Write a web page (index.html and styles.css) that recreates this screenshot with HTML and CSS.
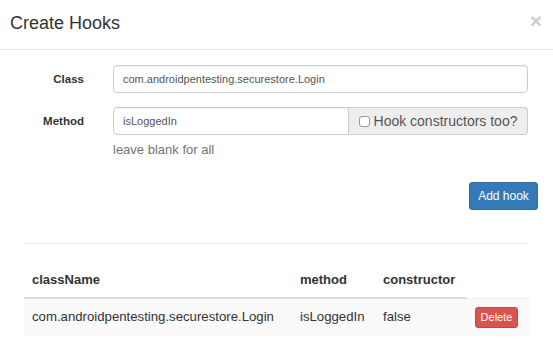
FILE: index.html
```html
<!DOCTYPE html>
<html lang="en">
<head>
    <meta charset="UTF-8">
    <title>Create Hooks</title>
    <link rel="stylesheet" href="styles.css">
</head>
<body>

<div class="modal">
    <div class="modal-header">
        <h4 class="modal-title">Create Hooks</h4>
        <span class="close">&times;</span>
    </div>

    <div class="modal-body">
        <div class="hook-form">
            <label class="form-label">Class</label>
            <input class="form-input" type="text" value="com.androidpentesting.securestore.Login">

            <label class="form-label">Method</label>
            <div class="input-group">
                <input class="form-input method-input" type="text" value="isLoggedIn">
                <span class="input-addon">
                    <input type="checkbox" class="check">
                    Hook constructors too?
                </span>
            </div>

            <span></span>
            <span class="help-text">leave blank for all</span>
        </div>

        <div class="actions">
            <button class="btn-primary">Add hook</button>
        </div>

        <div class="divider"></div>

        <table class="hook-table">
            <thead>
                <tr>
                    <th class="col-class">className</th>
                    <th class="col-method">method</th>
                    <th class="col-ctor">constructor</th>
                </tr>
            </thead>
            <tbody>
                <tr>
                    <td>com.androidpentesting.securestore.Login</td>
                    <td>isLoggedIn</td>
                    <td>false</td>
                    <td><button class="btn-danger">Delete</button></td>
                </tr>
            </tbody>
        </table>
    </div>
</div>

</body>
</html>
```

FILE: styles.css
```css
body {
    margin: 0;
    font-family: "Liberation Sans", Arial, sans-serif;
    color: #333;
    background: #fff;
}
.modal {
    width: 553px;
}
.modal-header {
    display: flex;
    align-items: flex-start;
    height: 49px;
    padding: 0 11px 0 10px;
    border-bottom: 1px solid #e5e5e5;
}
.modal-title {
    margin: 13px 0 0 0;
    font-size: 18px;
    font-weight: normal;
    line-height: 20px;
}
.close {
    margin-left: auto;
    margin-top: 10px;
    font-size: 21px;
    font-weight: bold;
    line-height: 21px;
    color: #000;
    opacity: 0.2;
}
.modal-body {
    padding: 15px 15px 0 24px;
}
.hook-form {
    display: grid;
    grid-template-columns: 60px 1fr;
    column-gap: 29px;
    row-gap: 14px;
    align-items: center;
    margin-right: 10px;
}
.form-label {
    text-align: right;
    font-size: 11.5px;
    font-weight: bold;
}
.form-input {
    box-sizing: border-box;
    height: 28px;
    padding: 0 9px;
    border: 1px solid #ccc;
    border-radius: 4px;
    font-family: inherit;
    font-size: 11px;
    color: #555;
    box-shadow: inset 0 1px 1px rgba(0, 0, 0, 0.05);
}
.input-group {
    display: flex;
}
.method-input {
    flex: 1;
    min-width: 0;
    border-radius: 4px 0 0 4px;
}
.input-addon {
    display: flex;
    align-items: center;
    justify-content: center;
    gap: 4px;
    box-sizing: border-box;
    width: 179px;
    height: 28px;
    background: #eee;
    border: 1px solid #ccc;
    border-left: none;
    border-radius: 0 4px 4px 0;
    font-size: 14px;
    color: #555;
}
.check {
    appearance: none;
    width: 11px;
    height: 11px;
    margin: 1px 0 0 0;
    background: #fff;
    border: 1px solid #999;
    border-radius: 3px;
}
.help-text {
    margin-top: -8px;
    font-size: 13px;
    line-height: 18px;
    color: #737373;
}
.actions {
    display: flex;
    justify-content: flex-end;
    margin-top: 23px;
}
.btn-primary {
    width: 69px;
    height: 28px;
    padding: 0;
    background: #337ab7;
    border: 1px solid #2e6da4;
    border-radius: 3px;
    color: #fff;
    font-family: inherit;
    font-size: 12px;
}
.divider {
    margin: 33px 9px 0 0;
    border-top: 1px solid #eee;
}
.hook-table {
    width: 505px;
    margin-top: 19px;
    border-collapse: collapse;
    font-size: 13.2px;
}
.hook-table th {
    padding: 8px;
    line-height: 18px;
    text-align: left;
    font-size: 13px;
    border-bottom: 2px solid #ddd;
}
.hook-table td {
    padding: 8px;
    line-height: 18px;
    background: #f9f9f9;
    border-top: 1px solid #eee;
    vertical-align: middle;
}
.col-class {
    width: 252px;
}
.col-method {
    width: 67px;
}
.col-ctor {
    width: 76px;
}
.btn-danger {
    display: block;
    width: 43px;
    height: 21px;
    padding: 0;
    background: #d9534f;
    border: 1px solid #d43f3a;
    border-radius: 3px;
    color: #fff;
    font-family: inherit;
    font-size: 11px;
}
```
